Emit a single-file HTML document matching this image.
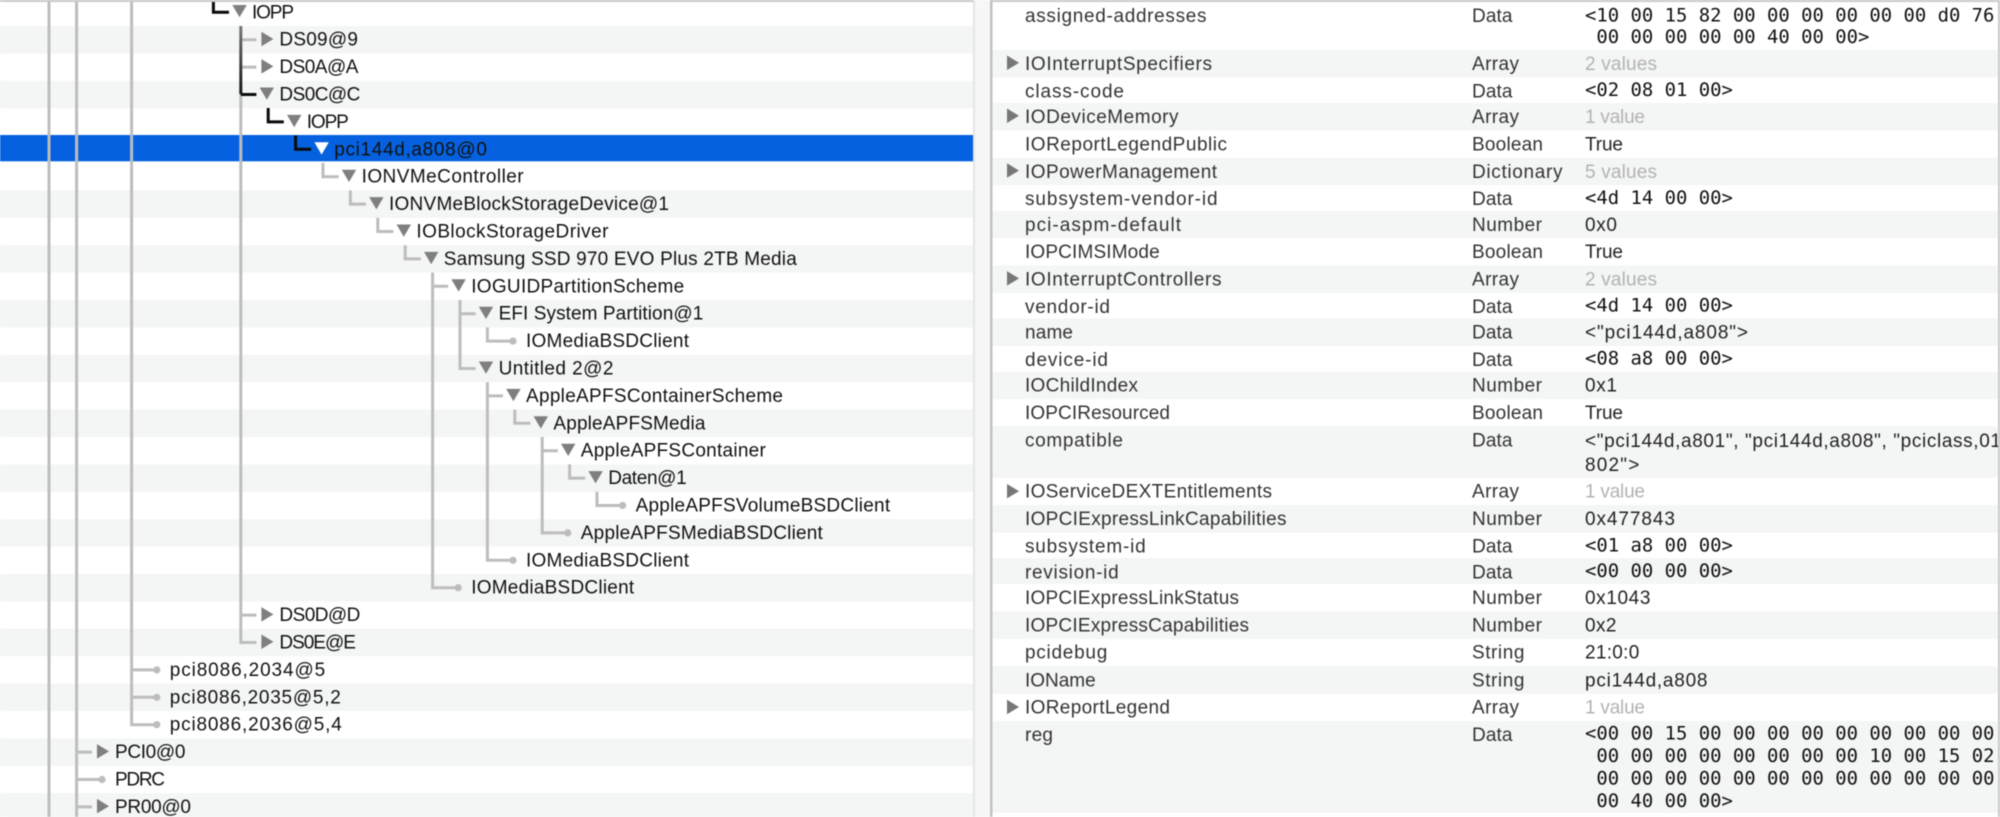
<!DOCTYPE html>
<html><head><meta charset="utf-8"><style>
html,body{margin:0;padding:0;background:#fff;width:2000px;height:817px;overflow:hidden}
svg{display:block;filter:blur(.45px)}
.t{font:19px "Liberation Sans",sans-serif;fill:#111}
.n{font:19px "Liberation Sans",sans-serif;fill:#333}
.v{font:19px "Liberation Sans",sans-serif;fill:#222}
.g{font:19px "Liberation Sans",sans-serif;fill:#b2b2b2}
.m{font:18.9px "DejaVu Sans Mono",monospace;fill:#111}
.l{stroke:#bdbdbd;stroke-width:3;fill:none}
.b{stroke:#0a0a0a;stroke-width:3;fill:none}
.s{fill:#f4f5f5}
.d{fill:#bdbdbd}
.a{fill:#7f7f7f}
</style></head><body>
<svg width="2000" height="817" viewBox="0 0 2000 817" xmlns="http://www.w3.org/2000/svg">
<defs><linearGradient id="gr" gradientUnits="userSpaceOnUse" x1="0" y1="26" x2="0" y2="95"><stop offset="0" stop-color="#777"/><stop offset="1" stop-color="#111"/></linearGradient>
<clipPath id="rc"><rect x="992" y="0" width="1006" height="817"/></clipPath></defs>
<rect width="2000" height="817" fill="#fff"/>
<!-- gutter -->
<rect x="973" y="0" width="17" height="817" fill="#f7f7f7"/>
<rect x="973" y="0" width="2" height="817" fill="#e4e4e4"/>
<!-- left stripes -->
<g class="s">
<rect y="26.1" width="973" height="27.4"/><rect y="80.9" width="973" height="27.4"/>
<rect y="190.4" width="973" height="27.4"/><rect y="245.2" width="973" height="27.4"/><rect y="300" width="973" height="27.4"/><rect y="354.8" width="973" height="27.4"/><rect y="409.6" width="973" height="27.4"/><rect y="464.4" width="973" height="27.4"/><rect y="519.2" width="973" height="27.4"/><rect y="574" width="973" height="27.4"/><rect y="628.8" width="973" height="27.4"/><rect y="683.6" width="973" height="27.4"/><rect y="738.4" width="973" height="27.4"/><rect y="793.2" width="973" height="23.8"/>
</g>
<rect y="135" width="973" height="26.3" fill="#0561df"/>
<!-- right stripes -->
<g class="s">
<rect x="992" y="50" width="1006" height="27.4"/><rect x="992" y="103" width="1006" height="27.4"/><rect x="992" y="157.8" width="1006" height="27.4"/><rect x="992" y="210.8" width="1006" height="27.4"/><rect x="992" y="265.6" width="1006" height="27.4"/><rect x="992" y="318.6" width="1006" height="27.4"/><rect x="992" y="371.8" width="1006" height="27.4"/><rect x="992" y="426.2" width="1006" height="51.5"/><rect x="992" y="505" width="1006" height="27.7"/><rect x="992" y="558.3" width="1006" height="25.6"/><rect x="992" y="611.5" width="1006" height="27.4"/><rect x="992" y="666.2" width="1006" height="27.5"/><rect x="992" y="721" width="1006" height="91.7"/>
</g>
<!-- tree lines -->
<path class="l" d="M49 0V817M76.6 0V817M131.6 0V724.7H157M76.6 752.1H92M76.6 779.5H102M76.6 806.9H92M131.6 669.9H157M131.6 697.3H157"/>
<path class="l" d="M240.8 94V642.5H256.4M240.8 39.7H256.4M240.8 67.1H256.4M240.8 615.1H256.4"/>
<path class="l" d="M323 163V176.7H338.6M350.4 190.4V204.1H366M377.8 217.8V231.5H393.4M405.2 245.2V258.9H420.8"/>
<path class="l" d="M432.6 272.6V587.7H458M432.6 286.3H448.2"/>
<path class="l" d="M460 300V368.5H475.6M460 313.7H475.6M487.4 327.4V341.1H513"/>
<path class="l" d="M487.4 382.2V560.3H513M487.4 395.9H503M514.8 409.6V423.3H530.4"/>
<path class="l" d="M542.2 437V532.9H568M542.2 450.7H557.8M569.6 464.4V478.1H585.2M597 491.8V505.5H622.6"/>
<path d="M240.8 26V94" stroke="url(#gr)" stroke-width="3" fill="none"/>
<path class="b" d="M213.4 0V12.3H229M240.8 94.5H256.4M268.2 108V121.9H283.8M295.6 135.6V149.3H311.2"/>
<!-- dots -->
<g class="d">
<circle cx="513" cy="341.1" r="3.6"/><circle cx="622.6" cy="505.5" r="3.6"/><circle cx="567.8" cy="532.9" r="3.6"/><circle cx="513" cy="560.3" r="3.6"/><circle cx="458.2" cy="587.7" r="3.6"/><circle cx="156.8" cy="669.9" r="3.6"/><circle cx="156.8" cy="697.3" r="3.6"/><circle cx="156.8" cy="724.7" r="3.6"/><circle cx="102" cy="779.5" r="3.6"/>
</g>
<!-- triangles left -->
<g class="a">
<path d="M232.3 5H246.8L239.5 17.3Z"/>
<path d="M261.4 31.7L273.4 39L261.4 46.2Z"/>
<path d="M261.4 59.1L273.4 66.4L261.4 73.6Z"/>
<path d="M259.6 87.5H274L266.8 99.8Z"/>
<path d="M287 114.9H301.4L294.2 127.2Z"/>
<path d="M341.8 169.7H356.2L349 182Z"/>
<path d="M369.2 197.1H383.6L376.4 209.4Z"/>
<path d="M396.6 224.5H411L403.8 236.8Z"/>
<path d="M424 251.9H438.4L431.2 264.2Z"/>
<path d="M451.4 279.3H465.8L458.6 291.6Z"/>
<path d="M478.8 306.7H493.2L486 319Z"/>
<path d="M478.8 361.5H493.2L486 373.8Z"/>
<path d="M506.2 388.9H520.6L513.4 401.2Z"/>
<path d="M533.6 416.3H548L540.8 428.6Z"/>
<path d="M561 443.7H575.4L568.2 456Z"/>
<path d="M588.4 471.1H602.8L595.6 483.4Z"/>
<path d="M261.4 607.1L273.4 614.4L261.4 621.6Z"/>
<path d="M261.4 634.5L273.4 641.8L261.4 649Z"/>
<path d="M97 744.1L109 751.4L97 758.6Z"/>
<path d="M97 798.9L109 806.2L97 813.4Z"/>
</g>
<path d="M314.4 142.3H328.8L321.6 154.6Z" fill="#fff"/>
<!-- left text -->
<g class="t">
<text x="252" y="18.3" textLength="42">IOPP</text>
<text x="279.4" y="45.7" textLength="78.5">DS09@9</text>
<text x="279.4" y="73.1" textLength="79">DS0A@A</text>
<text x="279.4" y="100.5" textLength="81">DS0C@C</text>
<text x="306.8" y="127.9" textLength="42">IOPP</text>
<text x="334.2" y="155.3" textLength="152.7">pci144d,a808@0</text>
<text x="361.6" y="182.7" textLength="162">IONVMeController</text>
<text x="389" y="210.1" textLength="280">IONVMeBlockStorageDevice@1</text>
<text x="416.4" y="237.5" textLength="192">IOBlockStorageDriver</text>
<text x="443.8" y="264.9" textLength="353">Samsung SSD 970 EVO Plus 2TB Media</text>
<text x="471.2" y="292.3" textLength="213">IOGUIDPartitionScheme</text>
<text x="498.6" y="319.7" textLength="204.7">EFI System Partition@1</text>
<text x="526" y="347.1" textLength="163">IOMediaBSDClient</text>
<text x="498.6" y="374.5" textLength="114.8">Untitled 2@2</text>
<text x="526" y="401.9" textLength="257">AppleAPFSContainerScheme</text>
<text x="553.4" y="429.3" textLength="152">AppleAPFSMedia</text>
<text x="580.8" y="456.7" textLength="185">AppleAPFSContainer</text>
<text x="608.2" y="484.1" textLength="78.5">Daten@1</text>
<text x="635.6" y="511.5" textLength="254.5">AppleAPFSVolumeBSDClient</text>
<text x="580.8" y="538.9" textLength="242">AppleAPFSMediaBSDClient</text>
<text x="526" y="566.3" textLength="163">IOMediaBSDClient</text>
<text x="471.2" y="593.7" textLength="163">IOMediaBSDClient</text>
<text x="279.4" y="621.1" textLength="81">DS0D@D</text>
<text x="279.4" y="648.5" textLength="76.5">DS0E@E</text>
<text x="169.8" y="675.9" textLength="155.4">pci8086,2034@5</text>
<text x="169.8" y="703.3" textLength="171">pci8086,2035@5,2</text>
<text x="169.8" y="730.7" textLength="172">pci8086,2036@5,4</text>
<text x="115" y="758.1" textLength="70.4">PCI0@0</text>
<text x="115" y="785.5" textLength="50">PDRC</text>
<text x="115" y="812.9" textLength="76">PR00@0</text>
</g>
<!-- right triangles -->
<g fill="#777">
<path d="M1007 55.5L1019 62.8L1007 70Z"/>
<path d="M1007 108.5L1019 115.8L1007 123Z"/>
<path d="M1007 163.3L1019 170.6L1007 177.8Z"/>
<path d="M1007 271.1L1019 278.4L1007 285.6Z"/>
<path d="M1007 484L1019 491.2L1007 498.4Z"/>
<path d="M1007 699.8L1019 707L1007 714.2Z"/>
</g>
<!-- right names -->
<g class="n">
<text x="1025" y="22" textLength="181.5">assigned-addresses</text>
<text x="1025" y="70" textLength="187">IOInterruptSpecifiers</text>
<text x="1025" y="97.4" textLength="99">class-code</text>
<text x="1025" y="123" textLength="153.5">IODeviceMemory</text>
<text x="1025" y="150.4" textLength="202">IOReportLegendPublic</text>
<text x="1025" y="177.8" textLength="192">IOPowerManagement</text>
<text x="1025" y="205.2" textLength="192.6">subsystem-vendor-id</text>
<text x="1025" y="230.8" textLength="156">pci-aspm-default</text>
<text x="1025" y="258.2" textLength="134.7">IOPCIMSIMode</text>
<text x="1025" y="285.6" textLength="196.5">IOInterruptControllers</text>
<text x="1025" y="313" textLength="85">vendor-id</text>
<text x="1025" y="338.6" textLength="48">name</text>
<text x="1025" y="366" textLength="83">device-id</text>
<text x="1025" y="391.6" textLength="113">IOChildIndex</text>
<text x="1025" y="419" textLength="145">IOPCIResourced</text>
<text x="1025" y="446.4" textLength="98">compatible</text>
<text x="1025" y="497.7" textLength="247">IOServiceDEXTEntitlements</text>
<text x="1025" y="525" textLength="261.5">IOPCIExpressLinkCapabilities</text>
<text x="1025" y="552.7" textLength="120.7">subsystem-id</text>
<text x="1025" y="578.5" textLength="93.7">revision-id</text>
<text x="1025" y="604" textLength="214">IOPCIExpressLinkStatus</text>
<text x="1025" y="631.5" textLength="224">IOPCIExpressCapabilities</text>
<text x="1025" y="658.5" textLength="82.3">pcidebug</text>
<text x="1025" y="686.3" textLength="70.7">IOName</text>
<text x="1025" y="713.7" textLength="145">IOReportLegend</text>
<text x="1025" y="741" textLength="28">reg</text>
</g>
<!-- right types -->
<g class="n">
<text x="1472" y="22" textLength="40.5">Data</text>
<text x="1472" y="70" textLength="47">Array</text>
<text x="1472" y="97.4" textLength="40.5">Data</text>
<text x="1472" y="123" textLength="47">Array</text>
<text x="1472" y="150.4" textLength="71">Boolean</text>
<text x="1472" y="177.8" textLength="90.5">Dictionary</text>
<text x="1472" y="205.2" textLength="40.5">Data</text>
<text x="1472" y="230.8" textLength="70">Number</text>
<text x="1472" y="258.2" textLength="71">Boolean</text>
<text x="1472" y="285.6" textLength="47">Array</text>
<text x="1472" y="313" textLength="40.5">Data</text>
<text x="1472" y="338.6" textLength="40.5">Data</text>
<text x="1472" y="366" textLength="40.5">Data</text>
<text x="1472" y="391.6" textLength="70">Number</text>
<text x="1472" y="419" textLength="71">Boolean</text>
<text x="1472" y="446.4" textLength="40.5">Data</text>
<text x="1472" y="497.7" textLength="47">Array</text>
<text x="1472" y="525" textLength="70">Number</text>
<text x="1472" y="552.7" textLength="40.5">Data</text>
<text x="1472" y="578.5" textLength="40.5">Data</text>
<text x="1472" y="604" textLength="70">Number</text>
<text x="1472" y="631.5" textLength="70">Number</text>
<text x="1472" y="658.5" textLength="52.4">String</text>
<text x="1472" y="686.3" textLength="52.4">String</text>
<text x="1472" y="713.7" textLength="47">Array</text>
<text x="1472" y="741" textLength="40.5">Data</text>
</g>
<!-- right values -->
<g clip-path="url(#rc)">
<g class="m">
<text x="1585" y="21.3">&lt;10 00 15 82 00 00 00 00 00 00 d0 76</text>
<text x="1596.4" y="43">00 00 00 00 00 40 00 00&gt;</text>
<text x="1585" y="96">&lt;02 08 01 00&gt;</text>
<text x="1585" y="203.9">&lt;4d 14 00 00&gt;</text>
<text x="1585" y="311.7">&lt;4d 14 00 00&gt;</text>
<text x="1585" y="364.7">&lt;08 a8 00 00&gt;</text>
<text x="1585" y="551.4">&lt;01 a8 00 00&gt;</text>
<text x="1585" y="577">&lt;00 00 00 00&gt;</text>
<text x="1585" y="739.7">&lt;00 00 15 00 00 00 00 00 00 00 00 00</text>
<text x="1596.4" y="762">00 00 00 00 00 00 00 00 10 00 15 02</text>
<text x="1596.4" y="784.4">00 00 00 00 00 00 00 00 00 00 00 00</text>
<text x="1596.4" y="806.8">00 40 00 00&gt;</text>
</g>
<g class="g">
<text x="1585" y="70" textLength="72">2 values</text>
<text x="1585" y="123" textLength="60">1 value</text>
<text x="1585" y="177.8" textLength="72">5 values</text>
<text x="1585" y="285.6" textLength="72">2 values</text>
<text x="1585" y="497.7" textLength="60">1 value</text>
<text x="1585" y="713.7" textLength="60">1 value</text>
</g>
<g class="v">
<text x="1585" y="150.4" textLength="38">True</text>
<text x="1585" y="230.8" textLength="32">0x0</text>
<text x="1585" y="258.2" textLength="38">True</text>
<text x="1585" y="338.6" textLength="163">&lt;"pci144d,a808"&gt;</text>
<text x="1585" y="391.6" textLength="32">0x1</text>
<text x="1585" y="419" textLength="38">True</text>
<text x="1585" y="447" textLength="416">&lt;"pci144d,a801", "pci144d,a808", "pciclass,01</text>
<text x="1585" y="471" textLength="54.3">802"&gt;</text>
<text x="1585" y="525" textLength="90">0x477843</text>
<text x="1585" y="604" textLength="65.4">0x1043</text>
<text x="1585" y="631.5" textLength="31.4">0x2</text>
<text x="1585" y="658.5" textLength="54.3">21:0:0</text>
<text x="1585" y="686.3" textLength="122.5">pci144d,a808</text>
</g>
</g>
<!-- borders -->
<rect x="0" y="0" width="973" height="2" fill="#c9c9c9"/>
<rect x="990" y="0" width="1010" height="2" fill="#c9c9c9"/>
<rect x="990" y="0" width="2.5" height="817" fill="#c2c2c2"/>
<rect x="1998" y="0" width="2" height="817" fill="#c9c9c9"/>
</svg>
</body></html>
